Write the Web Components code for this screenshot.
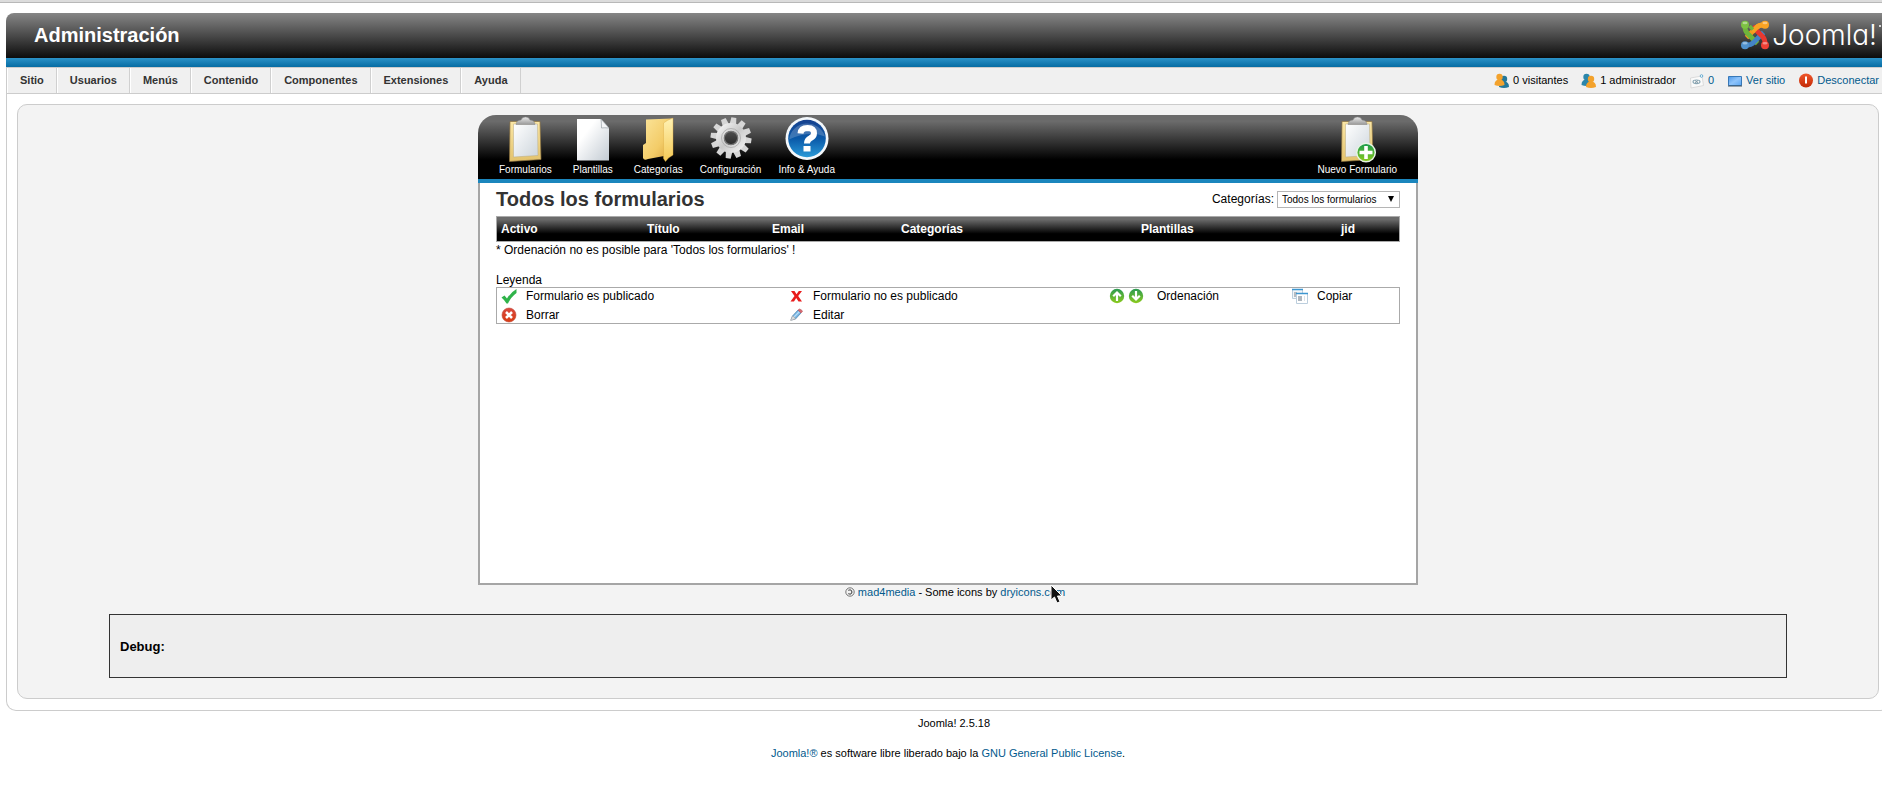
<!DOCTYPE html>
<html lang="es">
<head>
<meta charset="utf-8">
<title>Administración</title>
<style>
  body {
    margin: 0;
    overflow-x: hidden;
    background: #fff;
    color: #000;
    font-family: "Liberation Sans", Arial, sans-serif;
    font-size: 12px;
  }
</style>
</head>
<body>
<admin-page>
  <admin-header slot="header">Administración</admin-header>
  <admin-menu slot="menu"></admin-menu>

  <form-panel>
    <tool-button slot="tools" icon="clipboard">Formularios</tool-button>
    <tool-button slot="tools" icon="page">Plantillas</tool-button>
    <tool-button slot="tools" icon="folder">Categorías</tool-button>
    <tool-button slot="tools" icon="gear">Configuración</tool-button>
    <tool-button slot="tools" icon="help">Info &amp; Ayuda</tool-button>
    <tool-button slot="actions" icon="clipboard-add">Nuevo Formulario</tool-button>
    <form-list></form-list>
    <icon-legend></icon-legend>
  </form-panel>
  <credit-line></credit-line>
  <debug-box>Debug:</debug-box>

  <page-footer slot="footer"></page-footer>
</admin-page>

<script>
// gear teeth, one every 30 degrees
const teeth = Array.from({ length: 12 }, (_, i) =>
  `<path d="M21.5 3.5h5l1 9h-7z" transform="rotate(${i * 30 + 8} 24 24)"/>`).join("");

const clipboard = `
  <defs>
    <linearGradient id="board" x1="0" y1="0" x2="0" y2="1"><stop offset="0" stop-color="#fbe7a6"/><stop offset="1" stop-color="#e3c26c"/></linearGradient>
    <linearGradient id="sheet" x1="0" y1="0" x2="1" y2="1"><stop offset="0" stop-color="#fff"/><stop offset="1" stop-color="#cdd5dc"/></linearGradient>
    <linearGradient id="clip" x1="0" y1="0" x2="0" y2="1"><stop offset="0" stop-color="#e8e8e8"/><stop offset="1" stop-color="#999"/></linearGradient>
  </defs>
  <path d="M9 6.500h30l1 38-31.500 2z" fill="url(#board)" stroke="#8d7340" stroke-width=".7"/>
  <path d="M12.500 9h24l.5 31.500-24.500 1.500z" fill="url(#sheet)" stroke="#b9aa80" stroke-width=".5"/>
  <path d="M15 9.500q0-4 5-4.500 1-3 4.500-3T29 5q5 .5 5 4.500z" fill="url(#clip)" stroke="#888" stroke-width=".5"/>`;

const person = (color, x, y) =>
  `<g fill="${color}"><circle cx="${x}" cy="${y}" r="3.200"/><path d="M${x - 5} ${y + 8}q0-5.500 5-5.500t5 5.500q-5 2-10 0z"/></g>`;

const arrowDisc = (d) => `
  <defs><linearGradient id="disc" x1="0" y1="0" x2="0" y2="1"><stop offset="0" stop-color="#2b9a52"/><stop offset="1" stop-color="#8ccb1e"/></linearGradient></defs>
  <circle cx="8" cy="8" r="7.200" fill="url(#disc)"/>
  <path d="${d}" fill="none" stroke="#fff" stroke-width="2.200"/>`;

// each icon: [width, height, markup]
const ICONS = {
  clipboard: [48, 48, clipboard],
  "clipboard-add": [48, 48, clipboard + `
    <defs><linearGradient id="add" x1="0" y1="0" x2="0" y2="1"><stop offset="0" stop-color="#149a4d"/><stop offset="1" stop-color="#8ccb1e"/></linearGradient></defs>
    <circle cx="33" cy="37.500" r="9.300" fill="url(#add)" stroke="#e6f3e4" stroke-width="1.500"/>
    <path d="M33 31v13M26.500 37.500h13" stroke="#fff" stroke-width="3.600"/>`],
  page: [48, 48, `
    <defs><linearGradient id="paper" x1="0" y1="0" x2="1" y2="1"><stop offset=".3" stop-color="#fff"/><stop offset="1" stop-color="#c3cbd3"/></linearGradient></defs>
    <path d="M8 4h24l8 9v32.500H8z" fill="url(#paper)"/>
    <path d="M32 4l8 9q-5-.5-7.500 0 0-5-.5-9z" fill="#f4f6f8" stroke="#8a9299" stroke-width=".6"/>`],
  folder: [48, 48, `
    <defs>
      <linearGradient id="back" x1="0" y1="0" x2="1" y2="1"><stop offset="0" stop-color="#fbe49a"/><stop offset=".6" stop-color="#f3cc68"/><stop offset="1" stop-color="#d8a23c"/></linearGradient>
      <linearGradient id="front" x1="0" y1="0" x2="0" y2="1"><stop offset="0" stop-color="#fff2b4"/><stop offset="1" stop-color="#f4c956"/></linearGradient>
    </defs>
    <path d="M12 4.500l26-1v36l-24 4.500q-4 2-5-1V30l3-2z" fill="url(#back)"/>
    <path d="M39 3q-6 2-9.500 5v35.500l2 3q2.500-4 7.500-6.500z" fill="url(#front)" stroke="#dba940" stroke-width=".4"/>`],
  gear: [48, 48, `
    <defs><linearGradient id="steel" x1="0" y1="0" x2="1" y2="1"><stop offset="0" stop-color="#f0f0f0"/><stop offset=".5" stop-color="#c9c9c9"/><stop offset="1" stop-color="#ededed"/></linearGradient></defs>
    <g transform="translate(0 -1)"><g fill="#d6d6d6">${teeth}</g>
    <circle cx="24" cy="24" r="11" fill="none" stroke="url(#steel)" stroke-width="8"/>
    <circle cx="24" cy="24" r="9.500" fill="none" stroke="#aaa" stroke-width=".8"/>
    <circle cx="24" cy="24" r="6.700" fill="none" stroke="#777" stroke-width="1.200"/></g>`],
  help: [48, 48, `
    <defs><linearGradient id="blue" x1="0" y1="0" x2="0" y2="1"><stop offset="0" stop-color="#16408e"/><stop offset=".5" stop-color="#0a59a8"/><stop offset="1" stop-color="#2a9ad8"/></linearGradient></defs>
    <circle cx="24" cy="23.500" r="21.500" fill="#f4f8fb"/>
    <circle cx="24" cy="23.500" r="18.800" fill="url(#blue)"/>
    <path d="M6 24.500A18.500 18.500 0 0 1 42 21.500Q26 15.500 6 24.500z" fill="#fff" opacity=".2"/>
    <path d="M17.500 18.500q.5-5.500 7-5.500 6.500.2 6.500 5.200 0 3-3.500 5-3.500 1.800-3.500 5.300" fill="none" stroke="#fff" stroke-width="6"/>
    <path d="M20.500 31h7v5.500h-7z" fill="#fff"/>`],
  visitors: [16, 16, person("#23789a", 10, 6) + person("#f3a22c", 5.5, 4)],
  admins: [16, 16, person("#2b86aa", 5.5, 4) + person("#f3a22c", 10, 6)],
  mail: [16, 16, `
    <path d="M1.500 5L13 3l1.500 9.500-12.500 2.500z" fill="#fafafa" stroke="#d0d0d0" stroke-width=".7"/>
    <ellipse cx="7.500" cy="8.800" rx="3.500" ry="1.800" fill="none" stroke="#8ca8b5" stroke-width="1.100"/>
    <path d="M6 7.500l3 2.500M9 7.500L6 10" stroke="#6c8a99" stroke-width=".8"/>
    <circle cx="12.500" cy="3" r="1.300" fill="#fff" stroke="#5aa4cc" stroke-width=".9"/>`],
  screen: [16, 16, `
    <defs><linearGradient id="glass" x1="0" y1="0" x2="1" y2="1"><stop offset="0" stop-color="#4b98e8"/><stop offset=".5" stop-color="#8fc4fb"/><stop offset="1" stop-color="#5ba6f2"/></linearGradient></defs>
    <path d="M1.500 3.500h13v9h-13z" fill="url(#glass)" stroke="#3778b8"/>
    <path d="M1 13h14" stroke="#3f5263"/>`],
  logout: [16, 16, `
    <defs><linearGradient id="red" x1="0" y1="0" x2="0" y2="1"><stop offset="0" stop-color="#f0572c"/><stop offset="1" stop-color="#c22a06"/></linearGradient></defs>
    <circle cx="8" cy="7.500" r="7" fill="url(#red)"/>
    <path d="M8 3.500v7" stroke="#fff" stroke-width="2"/>`],
  check: [16, 16, `<path d="M.5 9.500L3.500 7.500 6 10.500Q9.500 4.500 15.500 1v4Q10 9 7 15.500H5.500Q3.500 12 .5 9.500z" fill="#2fb34a"/>`],
  cross: [16, 16, `<path d="M3 3h3.500l2 3.200L10.800 3H14l-3.800 5 3.800 5.500h-3.500l-2.300-3.500L6 13.500H2.500L6.500 8z" fill="#e81c1c"/>`],
  remove: [16, 16, `
    <defs><linearGradient id="rm" x1="0" y1="0" x2="0" y2="1"><stop offset="0" stop-color="#d9483f"/><stop offset="1" stop-color="#d93c12"/></linearGradient></defs>
    <circle cx="8" cy="8" r="7" fill="url(#rm)" stroke="#c04434" stroke-width=".6"/>
    <path d="M5 5l6 6M11 5l-6 6" stroke="#fff" stroke-width="2.600"/>`],
  pencil: [16, 16, `
    <path d="M3 13l1.500-4L10 3l3 3L7.500 12z" fill="#75b4e2" stroke="#4a7ea8" stroke-width=".7"/>
    <path d="M5.500 10.500L11.500 4.500" stroke="#b9dcf5" stroke-width="1.200"/>
    <path d="M10 3l1.500-1q2.500.5 3 2.500L13 6z" fill="#d66a70" stroke="#b8565e" stroke-width=".6"/>
    <path d="M2.500 13.500l2-4.500q2 .5 3 3z" fill="#dcdcdc" stroke="#999" stroke-width=".5"/>`],
  up: [16, 16, arrowDisc("M8 13V5M4.200 8.200L8 4.500l3.800 3.700")],
  down: [16, 16, arrowDisc("M8 3v8M4.200 7.800L8 11.500l3.800-3.700")],
  copy: [16, 16, `
    <path d="M.5 1.500h10v9H.5z" fill="#f2f6f9" stroke="#bccedd"/>
    <path d="M0 1.500h11" stroke="#3c96d0" stroke-width="1.500"/>
    <path d="M2 4h3v5H2z" fill="#b4bbc2"/>
    <path d="M4.500 5.500h11v10h-11z" fill="#fff" stroke="#bccedd"/>
    <path d="M4 5.500h12" stroke="#3c96d0" stroke-width="1.500"/>
    <path d="M6 8h4v5H6z" fill="#aeb6be"/><path d="M12 8h1v5h-1z" fill="#dde2e7"/>`],
  copyleft: [10, 10, `
    <circle cx="5" cy="5" r="4.200" fill="none" stroke="#555" stroke-width=".8"/>
    <path d="M3.300 3.300Q6.800 2 6.900 5T3.300 6.700" fill="none" stroke="#333"/>`],
  joomla: [30, 30, `
    <g fill="none" stroke-width="4.800">
      <path d="M25 5Q19.500 4.500 16.500 7.500L6.500 17.500" stroke="#f59a1d"/>
      <path d="M5 5Q4.500 10.500 7.500 13.500L17.500 23.500" stroke="#6fb53b"/>
      <path d="M5 25Q10.500 25.500 13.500 22.500L23.500 12.500" stroke="#4484c6"/>
      <path d="M25 25Q25.500 19.500 22.500 16.500L12.500 6.500" stroke="#e8392f"/>
      <path d="M25 5Q19.500 4.500 16.500 7.500L12.500 11.500" stroke="#f9a323"/>
      <path d="M12.500 6.500L10 9" stroke="#6fb53b"/>
    </g>
    <circle cx="5" cy="4.800" r="4" fill="#7dc143"/><circle cx="25" cy="4.800" r="4" fill="#f9a323"/>
    <circle cx="25" cy="25.200" r="4" fill="#ee4035"/><circle cx="5" cy="25.200" r="4" fill="#5091cd"/>
    <g fill="#fff" opacity=".4"><ellipse cx="5" cy="3" rx="2.500" ry="1.300"/><ellipse cx="25" cy="3" rx="2.500" ry="1.300"/><ellipse cx="5" cy="23.300" rx="2.500" ry="1.300"/><ellipse cx="25" cy="23.300" rx="2.500" ry="1.300"/></g>`],
  pointer: [14, 20, `<path d="M1 1v15l3.500-3 2.500 6 3-1.200-2.500-5.800H12z" fill="#111" stroke="#fff"/>`],
};

// registers an element whose shadow root is cloned from a template
function define(name, html, setup) {
  const template = document.createElement("template");
  template.innerHTML = html;
  customElements.define(name, class extends HTMLElement {
    constructor() {
      super();
      this.attachShadow({ mode: "open" }).append(template.content.cloneNode(true));
    }
    connectedCallback() {
      if (setup) setup(this, this.shadowRoot);
    }
  });
}

define("app-icon", `
  <style>
    :host { display: block; flex: none; }
    svg { display: block; }
  </style>
  <svg aria-hidden="true"></svg>
`, (host, root) => {
  const [width, height, markup] = ICONS[host.getAttribute("name")];
  const svg = root.querySelector("svg");
  svg.setAttribute("width", width);
  svg.setAttribute("height", height);
  svg.setAttribute("viewBox", `0 0 ${width} ${height}`);
  svg.innerHTML = markup;
});

define("admin-page", `
  <style>
    :host {
      display: block;
      border-top: 2px solid #dcdcdc;
      box-shadow: inset 0 1px #b8b8b8;
      padding-top: 11px;
    }
    /* the page runs a little past the right edge of the window */
    .wrap { margin: 0 -8px 0 6px; }
    .frame {
      border: 1px solid #ccc;
      border-top: 0;
      border-radius: 0 0 10px 10px;
      padding: 10px 10px 11px;
    }
    main {
      display: block;
      background: #f3f3f3;
      border: 1px solid #ccc;
      border-radius: 10px;
      padding: 10px;
    }
  </style>
  <div class="wrap">
    <slot name="header"></slot>
    <slot name="menu"></slot>
    <div class="frame"><main><slot></slot></main></div>
    <slot name="footer"></slot>
  </div>
`);

define("admin-header", `
  <style>
    :host {
      display: block;
      border-radius: 8px 0 0 0;
      overflow: hidden;
      color: #fff;
    }
    .bar {
      display: flex;
      align-items: center;
      justify-content: space-between;
      height: 43px;
      padding: 0 9px 2px 28px;
      background: linear-gradient(#868686, #4a4a4a 50%, #0c0c0c);
    }
    .rule { height: 9px; background: linear-gradient(#2b92c8, #066ca3); }
    h1 { margin: 0; font-size: 20px; line-height: 24px; }
    .logo { display: flex; align-items: center; gap: 2px; }
    .word {
      font: 300 28px/32px Inter, "Liberation Sans", sans-serif;
      font-feature-settings: "cv11";
    }
    .dot { align-self: flex-start; margin-top: 6px; width: 2px; height: 2px; border-radius: 1px; background: #fff; }
  </style>
  <div class="bar">
    <h1><slot></slot></h1>
    <div class="logo">
      <app-icon name="joomla"></app-icon>
      <span class="word">Joomla!</span>
      <span class="dot"></span>
    </div>
  </div>
  <div class="rule"></div>
`);

define("admin-menu", `
  <style>
    :host {
      display: flex;
      justify-content: space-between;
      border: 1px solid #ccc;
      background: #f0f0f0;
      font-size: 11px;
      line-height: 25px;
    }
    nav, .status { display: flex; }
    a { text-decoration: none; }
    nav a {
      padding: 0 12px;
      border-left: 1px solid #fff;
      border-right: 1px solid #d0d0d0;
      color: #333;
      font-weight: bold;
    }
    .status { gap: 13px; padding-right: 10px; }
    .status > * { display: flex; align-items: center; gap: 3px; }
    .status a { color: #025a8d; }
  </style>
  <nav>
    <a href="#sitio">Sitio</a>
    <a href="#usuarios">Usuarios</a>
    <a href="#menus">Menús</a>
    <a href="#contenido">Contenido</a>
    <a href="#componentes">Componentes</a>
    <a href="#extensiones">Extensiones</a>
    <a href="#ayuda">Ayuda</a>
  </nav>
  <div class="status">
    <span><app-icon name="visitors"></app-icon>0 visitantes</span>
    <span><app-icon name="admins"></app-icon>1 administrador</span>
    <a href="#mensajes"><app-icon name="mail"></app-icon>0</a>
    <a href="#ver"><app-icon name="screen"></app-icon>Ver sitio</a>
    <a href="#salir"><app-icon name="logout"></app-icon>Desconectar</a>
  </div>
`);

define("form-panel", `
  <style>
    :host { display: block; box-sizing: border-box; max-width: 940px; margin: 0 auto; }
    .bar {
      display: flex;
      justify-content: space-between;
      padding: 0 21px;
      height: 64px;
      border-radius: 18px 18px 0 0;
      background: linear-gradient(#6b6b6b 10%, #000 70%);
      color: #fff;
    }
    .group { display: flex; gap: 17px; }
    .rule { height: 4px; background: #1b86bd; }
    .body {
      border: 2px solid #a5a5a5;
      border-top: 0;
      background: #fff;
      padding: 4px 16px;
      min-height: 392px;
    }
  </style>
  <div class="bar">
    <div class="group"><slot name="tools"></slot></div>
    <div class="group"><slot name="actions"></slot></div>
  </div>
  <div class="rule"></div>
  <div class="body"><slot></slot></div>
`);

define("tool-button", `
  <style>
    :host { display: block; }
    a {
      display: flex;
      flex-direction: column;
      align-items: center;
      color: #fff;
      font-size: 10px;
      line-height: 14px;
      text-decoration: none;
    }
  </style>
  <a href="#"><span><slot></slot></span></a>
`, (host, root) => {
  const icon = document.createElement("app-icon");
  icon.setAttribute("name", host.getAttribute("icon"));
  root.querySelector("a").prepend(icon);
});

define("form-list", `
  <style>
    :host { display: block; }
    header { display: flex; justify-content: space-between; align-items: center; height: 24px; }
    h2 { margin: 0; font-size: 20px; line-height: 24px; color: #333; }
    .filter { display: flex; align-items: center; gap: 3px; }
    select {
      appearance: none;
      width: 123px;
      height: 17px;
      margin: 0;
      padding: 0 4px;
      border: 1px solid #b5b5b5;
      border-radius: 0;
      background: #fff;
      color: #000;
      font: 10px "Liberation Sans", Arial, sans-serif;
    }
    .pick { position: relative; display: flex; }
    .pick::after {
      content: "";
      position: absolute;
      right: 6px;
      top: 5px;
      border: 3px solid transparent;
      border-top: 6px solid #000;
      border-bottom: 0;
      pointer-events: none;
    }
    table {
      width: 100%;
      margin-top: 5px;
      border: 1px solid #aaa;
      border-collapse: separate;
      border-spacing: 0;
      table-layout: fixed;
      background: linear-gradient(#6b6b6b 10%, #000 70%);
      color: #fff;
    }
    th { padding: 0 0 0 4px; line-height: 24px; text-align: left; }
    p { margin: 0; line-height: 16px; }
  </style>
  <header>
    <h2>Todos los formularios</h2>
    <div class="filter">
      <label for="category">Categorías:</label>
      <span class="pick"><select id="category"><option>Todos los formularios</option></select></span>
    </div>
  </header>
  <table>
    <colgroup>
      <col style="width: 146px"><col style="width: 125px"><col style="width: 129px">
      <col style="width: 240px"><col style="width: 200px"><col>
    </colgroup>
    <thead>
      <tr><th>Activo</th><th>Título</th><th>Email</th><th>Categorías</th><th>Plantillas</th><th>jid</th></tr>
    </thead>
  </table>
  <p>* Ordenación no es posible para 'Todos los formularios' !</p>
`);

define("icon-legend", `
  <style>
    :host { display: block; margin-top: 15px; }
    h3 { margin: 0; font-size: 12px; font-weight: normal; line-height: 14px; }
    ul {
      display: grid;
      grid-template-columns: 287px 321px 183px 1fr;
      row-gap: 3px;
      margin: 0;
      padding: 0;
      border: 1px solid #aaa;
      list-style: none;
    }
    li { display: flex; align-items: center; gap: 9px; padding-left: 4px; line-height: 16px; }
    .pair { display: flex; gap: 3px; padding-right: 4px; }
  </style>
  <h3>Leyenda</h3>
  <ul>
    <li><app-icon name="check"></app-icon>Formulario es publicado</li>
    <li><app-icon name="cross"></app-icon>Formulario no es publicado</li>
    <li><span class="pair"><app-icon name="up"></app-icon><app-icon name="down"></app-icon></span>Ordenación</li>
    <li><app-icon name="copy"></app-icon>Copiar</li>
    <li><app-icon name="remove"></app-icon>Borrar</li>
    <li><app-icon name="pencil"></app-icon>Editar</li>
  </ul>
`);

define("credit-line", `
  <style>
    :host {
      display: flex;
      justify-content: center;
      align-items: center;
      gap: 3px;
      padding-left: 14px;
      font-size: 11px;
      line-height: 14px;
    }
    a { color: #025a8d; text-decoration: none; }
    .last { position: relative; }
    app-icon.pointer { position: absolute; right: 1px; top: -2px; }
  </style>
  <app-icon name="copyleft"></app-icon>
  <span><a href="#mad4media">mad4media</a> - Some icons by
  <span class="last"><a href="#dryicons">dryicons.com</a><app-icon class="pointer" name="pointer"></app-icon></span></span>
`);

define("debug-box", `
  <style>
    :host {
      display: block;
      width: 90%;
      margin: 15px auto 10px;
      padding: 10px;
      border: 1px solid #333;
      background: #eee;
    }
    h2 { margin: 14px 0 12px; font-size: 13px; line-height: 16px; }
  </style>
  <h2><slot></slot></h2>
`);

define("page-footer", `
  <style>
    :host { display: block; padding-top: 5px; text-align: center; font-size: 11px; line-height: 15px; }
    p { margin: 0 0 15px; }
    .version { padding-left: 12px; }
    a { color: #025a8d; text-decoration: none; }
  </style>
  <p class="version">Joomla! 2.5.18</p>
  <p><a href="#joomla">Joomla!®</a> es software libre liberado bajo la <a href="#gpl">GNU General Public License</a>.</p>
`);
</script>
</body>
</html>
